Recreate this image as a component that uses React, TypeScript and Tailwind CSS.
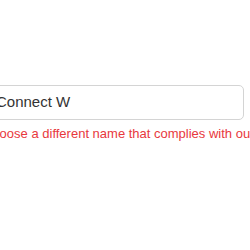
export default function App() {
  return (
    <div className="w-[250px] h-[250px] bg-white overflow-hidden" style={{ fontFamily: "'Liberation Sans', Arial, sans-serif" }}>
      <div className="pt-[85px] ml-[-17px] w-[261px]">
        <div className="h-[35px] border border-[#d4d4d4] rounded-[5px] flex items-center pl-[12px] text-[15px] text-[#333333]">
          Connect W
        </div>
        <div className="mt-[6px] text-[13px] leading-[16px] text-[#e8383d] whitespace-nowrap">
          Choose a different name that complies with our naming rules.
        </div>
      </div>
    </div>
  );
}
